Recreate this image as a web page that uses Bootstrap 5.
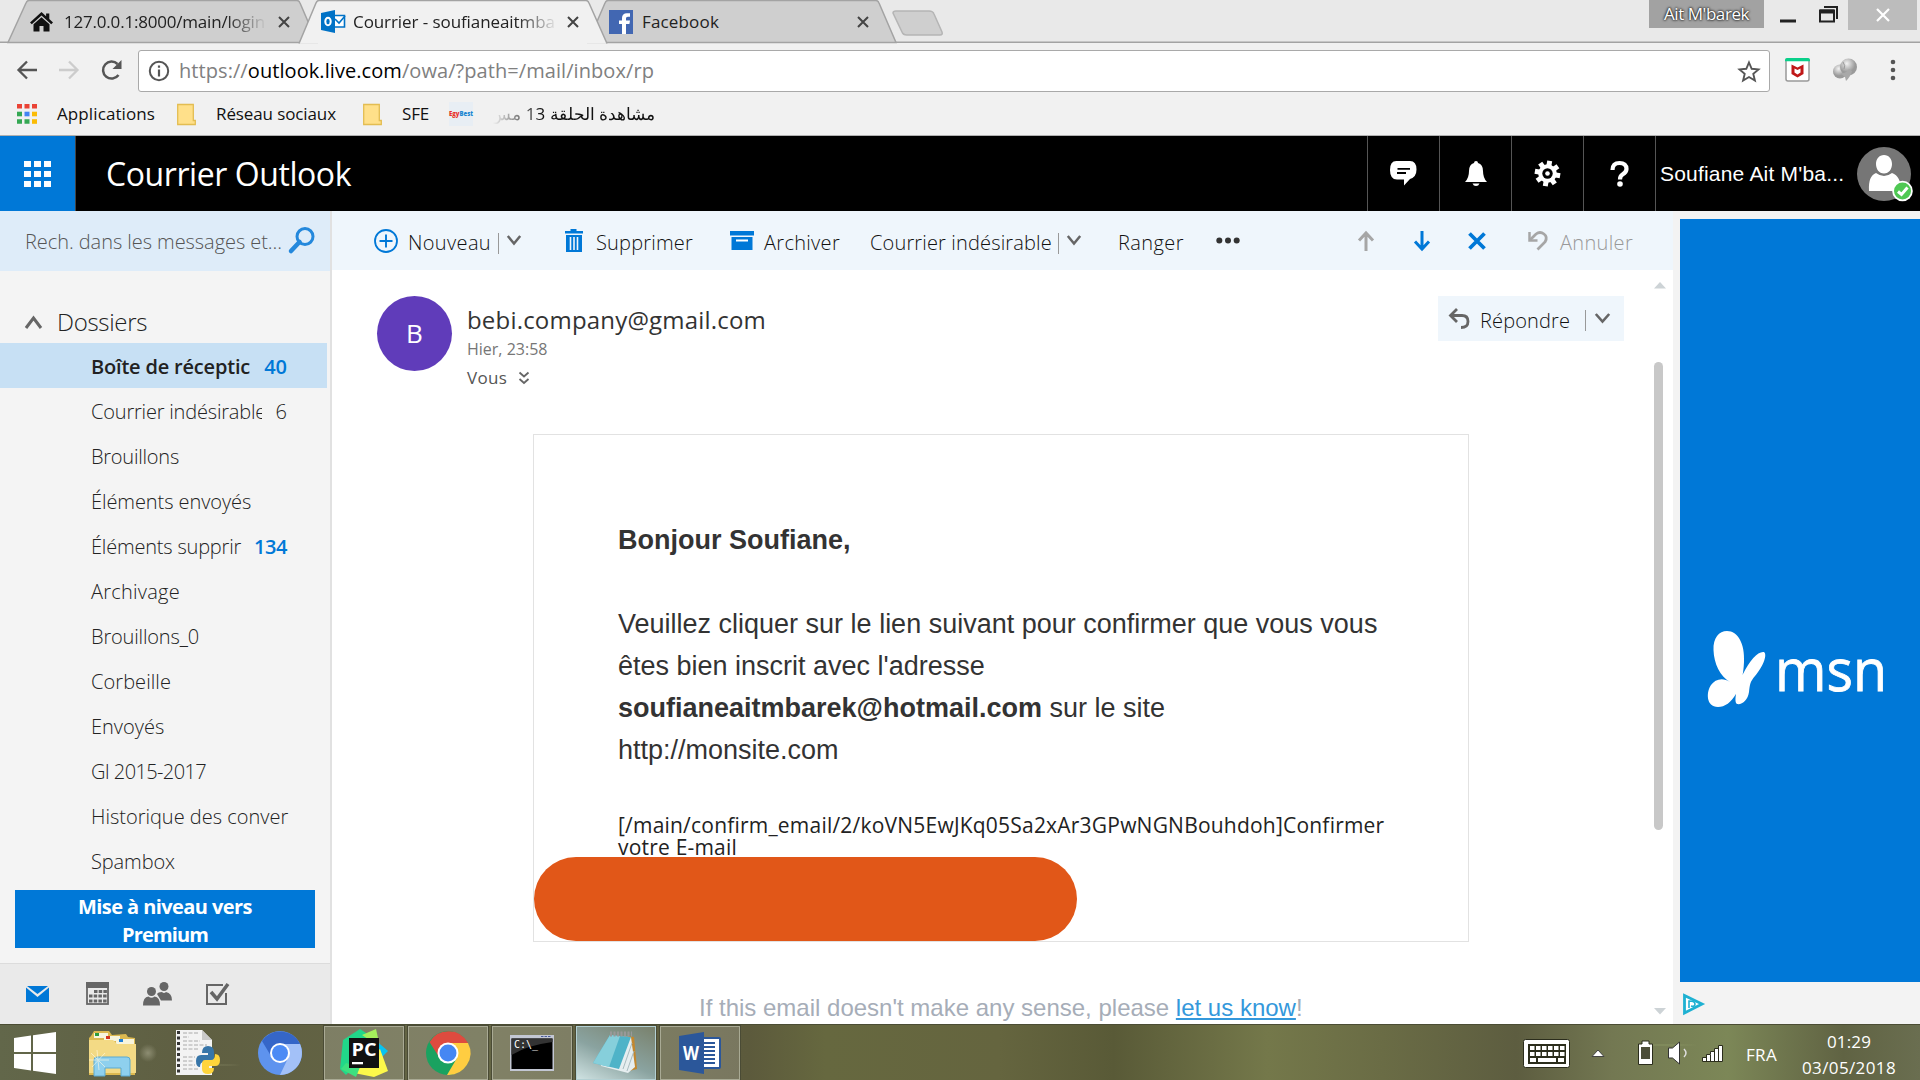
<!DOCTYPE html>
<html lang="fr">
<head>
<meta charset="utf-8">
<title>Courrier Outlook</title>
<link href="https://cdn.jsdelivr.net/npm/bootstrap@5.3.0/dist/css/bootstrap.min.css" rel="stylesheet">
<style>
body{width:1920px;height:1080px;overflow:hidden;background:#fff;font-family:"Open Sans","Noto Sans",sans-serif;color:#333;line-height:1.2}
svg{display:block;flex:none;overflow:visible}
.fit{white-space:pre;display:block}
.cells{display:grid;align-items:center}
/* browser chrome */
.tabstrip{height:43px;background:#e9e9e9;position:relative;font-size:17px;color:#222;grid-template-columns:29px 35px 209px 48px 32px 207px 49px 33px 216px 791px 115px 16px 39px 29px 69px 3px}
.tabstrip>*{position:relative}
.tab-shapes{position:absolute!important;left:0;top:0}
.tabstrip .fit{padding-top:1px}
.fade-end{overflow:hidden;-webkit-mask-image:linear-gradient(90deg,#000 80%,transparent 100%)}
.fade-start{-webkit-mask-image:linear-gradient(270deg,#000 70%,transparent 100%)}
.owner{height:28px;background:#a2a2a2;color:#fff;text-shadow:0 0 3px #000,0 0 2px #222;align-self:start}
.winclose{height:30px;background:#bcbcbc;align-self:start}
.navrow{height:54px;background:#f1f1f1;grid-template-columns:17px 42px 42px 37px 1632px 15px 48px 55px 32px}
.urlbox{height:42px;background:#fff;border:1px solid #a9a9a9;border-radius:3px;font-size:20px;color:#808080;margin-top:2px}
.urlbox b{color:#000;font-weight:400}
.marks{height:39px;background:#f1f1f1;border-bottom:1px solid #b0b0b0;font-size:17px;color:#111;padding-bottom:4px;grid-template-columns:17px 40px 120px 39px 147px 39px 47px 44px 162px}
/* suite header */
.suite{height:75px;background:#000;color:#fff}
.waffle{width:76px;background:#0078d7;border-right:1px solid #444}
.brand{font-size:32px;padding:2px 0 0 30px}
.suite-btn{width:72px;border-left:1px solid #555}
.persona{width:265px;border-left:1px solid #555;padding-left:4px;font:21px "Liberation Sans",sans-serif}
/* columns */
.stage{height:813px;overflow:hidden}
.side{width:332px;background:#f4f4f4;border-right:2px solid #e1e1e1}
.search{height:60px;background:#deecf9;color:#555;font-size:20px;font-weight:300;padding:2px 0 0 25px}
.search svg{margin-top:-4px}
.fold-head{height:42px;margin-top:30px;font-size:24px;font-weight:300;color:#222;padding-left:25px;padding-right:5px}
.folders .item{height:45px;width:327px;padding:2px 40px 0 91px;font-size:20px;font-weight:300;color:#222}
.folders .item.active{background:#c7e0f4;color:#222;font-weight:600}
.folders .name{overflow:hidden;white-space:nowrap}
.blue{color:#0078d7!important;font-weight:600}
.premium{width:300px;height:58px;margin:7px 0 0 15px;padding-top:3px;background:#0078d7;color:#fff;font-size:20px;font-weight:700;line-height:28px}
.modules{height:61px;background:#eaeaea;border-top:1px solid #dcdcdc;grid-template-columns:26px 60px 57px 63px 30px}
.mailcol{width:1341px;background:#fff}
.cmds{height:59px;background:#eff6fc;font-size:20px;font-weight:300;color:#111;grid-template-columns:42px 34px 89px 10px 58px 31px 134px 34px 106px 187px 10px 51px 98px 142px 56px 54px 60px 32px 80px}
.cmds .fit,.cmds .sep{margin-top:5px}
.sep{width:1px;height:21px;background:#999;margin-left:1px}
.cmds .disabled-cmd{color:#999}
.reader{height:754px}
.msg-head{padding:26px 0 0 45px}
.initial{width:75px;height:75px;border-radius:50%;background:#603cba;color:#fff;font-size:26px}
.who{padding-left:15px;padding-top:8px}
.addr{font-size:24px;line-height:32px}
.when{font-size:16px;color:#767676;line-height:27px}
.to{font-size:17px;line-height:30px;color:#555}
.reply{width:186px;height:45px;background:#eff6fc;font-size:20px;font-weight:300;color:#111;grid-template-columns:11px 31px 104px 11px 20px;margin-left:auto;margin-right:22px}
.reply .fit,.reply .sep{margin-top:4px}
.paper{width:936px;height:508px;border:1px solid #e2e2e2;margin:41px 0 0 201px;padding:84px 0 0 84px;font:27px/42px "Liberation Sans",sans-serif;color:#333}
.raw{font:21px/22px "Open Sans",sans-serif;color:#222;margin-top:43px}
.pill{width:543px;height:84px;border-radius:42px;background:#e15718;margin:-1px 0 0 -84px}
.foot{font:24px/30px "Liberation Sans",sans-serif;color:#a6adb8;margin:51px 0 0 367px}
.foot a{color:#3498db}
.scroller{width:27px;padding:12px 0 9px 8px}
.thumb{width:9px;height:468px;border-radius:5px;background:#c8c8c8;margin:73px 0 0 0}
.ads{width:247px;background:#f3f3f3;padding:8px 0 0 7px}
.msn{height:763px;background:#0078d7;padding-top:129px}
.adchoice{margin:12px 0 0 3px}
/* taskbar */
.taskbar{height:56px;color:#fff;background:radial-gradient(circle at 148px 28px,#8d8d72 0,transparent 9px),radial-gradient(ellipse at 222px 40px,#8d8f6a 0,transparent 28px),radial-gradient(ellipse at 1665px 20px,#8d9a66 0,transparent 40px),linear-gradient(90deg,#62674a 0,#5f5f42 10%,#656645 25%,#5c5a3c 39%,#66683f 43%,#65653f 52%,#595a37 58%,#74784a 66%,#6a6c45 72%,#5d5d40 79%,#737852 84%,#7c8757 90%,#606343 96%,#6a6e50);border-top:1px solid #4b4d34;padding-bottom:1px;grid-template-columns:14px 75px 87px 82px 66px 84px 84px 84px 84px 863px 69px 46px 30px 34px 44px 55px 96px}
.app{width:80px;height:54px;border:1px solid #a9aa94;background:#ffffff2e;box-shadow:0 0 0 1px #4a4b35}
.app.on{border-color:#b3d0d3;background:linear-gradient(25deg,#cfe2e2,#8aa3a0 45%,#79816c)}
.clock{line-height:26px;padding-top:4px}
.fra{padding-top:5px}
.fs17{font-size:17px}
/* tracking per label */
#t1,#t19{letter-spacing:-.2px}#t2,#t18{letter-spacing:-.08px}#t3{letter-spacing:.16px}#t4,#t20{letter-spacing:-.44px}
#t5,#t23{letter-spacing:.07px}#t6{letter-spacing:.1px}#t7,#t27{letter-spacing:-.11px}#t8,#t14,#t16{letter-spacing:-.19px}
#t9{letter-spacing:-.14px}#t10{letter-spacing:-.43px}#t11{letter-spacing:.2px}#t12{letter-spacing:-.06px}#t13{letter-spacing:-.31px}
#t17{letter-spacing:-.23px}#t21{letter-spacing:.24px}#t22{letter-spacing:-.16px}#t25{letter-spacing:-.62px}
#t28{letter-spacing:-.57px}#t29{letter-spacing:-.85px}#t30{letter-spacing:.35px}#t31,#t36{letter-spacing:.19px}#t32{letter-spacing:.3px}
#t33{letter-spacing:.15px}#t34{letter-spacing:.42px}#t35,#t48{letter-spacing:.33px}#t38{letter-spacing:.28px}#t39,#t49{letter-spacing:.13px}
#t45{letter-spacing:.21px}#t46{letter-spacing:.2px}#t50{letter-spacing:.38px}
</style>
</head>
<body>
<div class="tabstrip cells">
  <svg class="tab-shapes" width="1920" height="43" stroke="#a3a3a3" stroke-width="1.5">
    <path d="M0 42.3H1920"/>
    <path d="M893 13q0-2 3-2h33q4 0 5 3l8 18q1 3-2 3h-33q-4 0-5-3z" fill="#cfcfcf" stroke="#b5b5b5"/>
    <path d="M8 42.5 26 3q1-2.500 3-2.500H297q2 0 3 2.500L317 42.500z" fill="#cfcfcf"/>
    <path d="M588 42.500 605 3q1-2.500 3-2.500H876q2 0 3 2.500L896 42.500z" fill="#cfcfcf"/>
    <path d="M299 43.500 316 3q1-2.500 3-2.500H586q2 0 3 2.500L607 43.500" fill="#f1f1f1"/>
  </svg>
  <i></i>
  <svg width="25" height="20" viewBox="0 0 25 20"><path d="M12.500 0 1 10.500l1.800 1.700 9.700-8.700 9.700 8.700L24 10.500l-3.700-3.400V1.500h-3.200v2.700zM4.500 12.200V19.500h6v-5.500h4v5.500h6v-7.300l-8-7z" fill="#111"/></svg>
  <div class="fade-end" style="width:203px"><span class="fit" id="t1">127.0.0.1:8000/main/login</span></div>
  <svg width="45" height="12"><path d="M6 1 16 11M16 1 6 11" stroke="#444" stroke-width="2"/></svg>
  <svg width="25" height="23" viewBox="0 0 25 23"><path d="M0 3 14 0v23L0 20z" fill="#0072c6"/><path d="M14 5.500h9.500V17H14" fill="#fff" stroke="#0072c6" stroke-width="1.600"/><path d="M14 9l4 4 6-7" fill="none" stroke="#0072c6" stroke-width="1.600"/><ellipse cx="7" cy="11.500" rx="2.700" ry="3.700" fill="none" stroke="#fff" stroke-width="2"/></svg>
  <div class="fade-end" style="width:205px"><span class="fit" id="t2">Courrier - soufianeaitmba</span></div>
  <svg width="45" height="12"><path d="M8 1 18 11M18 1 8 11" stroke="#444" stroke-width="2"/></svg>
  <svg width="24" height="24" viewBox="0 0 24 24"><path d="M0 0h24v24H0z" fill="#4267b2"/><path d="M13 24V14h-3v-3.600h3V8c0-3.200 2-4.800 4.800-4.800H21v3.500h-2c-1.500 0-2 .7-2 2v1.700h4L20.400 14H17v10z" fill="#fff"/></svg>
  <span class="fit" id="t3">Facebook</span>
  <svg width="45" height="12"><path d="M0 1 10 11M10 1 0 11" stroke="#444" stroke-width="2"/></svg>
  <div class="owner d-flex justify-content-center align-items-center fs17"><span class="fit" id="t4">Ait M'barek</span></div>
  <i></i>
  <svg width="20" height="20"><path d="M0 9H16" stroke="#222" stroke-width="3"/></svg>
  <svg width="20" height="18" class="mb-3"><g transform="translate(0,1)" fill="none" stroke="#222" stroke-width="2"><path d="M1 4.500h14v11H1z"/><path d="M1 5.500H15" stroke-width="4"/><path d="M5 1h13v12"/></g></svg>
  <div class="winclose d-flex justify-content-center align-items-center"><svg width="14" height="12"><path d="M1 0 13 12M13 0 1 12" stroke="#fff" stroke-width="2.200"/></svg></div>
</div>
<div class="navrow cells">
  <i></i>
  <svg width="21" height="20"><path d="M20 10H2M10 1.500 1.500 10l8.500 8.500" fill="none" stroke="#555" stroke-width="2.300"/></svg>
  <svg width="21" height="20"><path d="M0 10H18M10 1.500 18.500 10 10 18.500" fill="none" stroke="#ccc" stroke-width="2.300"/></svg>
  <svg width="22" height="20"><path d="M17.500 15A8.500 8.500 0 1 1 16.500 4" fill="none" stroke="#555" stroke-width="2.500"/><path d="M20.500 0v9h-9z" fill="#555"/></svg>
  <div class="urlbox d-flex align-items-center">
    <svg width="40" height="22"><g transform="translate(20,11)"><circle r="9.200" fill="none" stroke="#555" stroke-width="2"/><path d="M0-5.500v2.300M0-1.500v7" stroke="#555" stroke-width="2.200"/></g></svg>
    <span class="fit" id="t5">https://<b>outlook.live.com</b>/owa/?path=/mail/inbox/rp</span>
    <svg class="ms-auto" width="31" height="21" viewBox="0 0 31 21"><path d="M11 1.500l2.700 6.300 6.800.6-5.200 4.500 1.600 6.700L11 16l-5.900 3.600 1.600-6.700L1.500 8.400l6.800-.6z" fill="none" stroke="#555" stroke-width="1.900"/></svg>
  </div>
  <i></i>
  <svg width="25" height="24"><rect x="1" y="1" width="23" height="22" rx="2" fill="#fff" stroke="#999" stroke-width="1.500"/><path d="M0 3.200V2q0-2 2-2h21q2 0 2 2v1.200z" fill="#0ad08a"/><path d="M6.500 6.500 12.500 9.500 18.500 6.500V16l-6 3.500L6.500 16z" fill="#c01818"/><path d="M9.500 10.500l3 1.600 3-1.600v4l-3 2-3-2z" fill="#fff"/></svg>
  <svg width="26" height="24"><defs><radialGradient id="gb" cx=".4" cy=".3"><stop stop-color="#f2f2f2"/><stop offset="1" stop-color="#9a9a9a"/></radialGradient></defs><circle cx="7" cy="13.500" r="7" fill="url(#gb)"/><circle cx="15.500" cy="9" r="8.500" fill="url(#gb)"/><path d="M7 15q6 1 9-4l3 2q-1 5-6 10l-1-4z" fill="#a8a8a8"/><path d="M10 4q3 4 1 7" stroke="#999" fill="none"/></svg>
  <svg width="6" height="22" class="ms-1" fill="#555"><circle cx="1" cy="3" r="2.300"/><circle cx="1" cy="11" r="2.300"/><circle cx="1" cy="19" r="2.300"/></svg>
</div>
<div class="marks cells">
  <i></i>
  <svg width="21" height="20"><g stroke-width="4.600" stroke-dasharray="5 2.500"><path d="M0 2.300H20" stroke="#ea4335"/><path d="M0 10H5" stroke="#34a853"/><path d="M7.500 10h5" stroke="#4285f4"/><path d="M15 10h5" stroke="#fbbc05"/><path d="M0 17.500H12.500" stroke="#34a853"/><path d="M15 17.500h5" stroke="#fbbc05"/></g></svg>
  <span class="fit" id="t6">Applications</span>
  <svg width="19" height="23"><path d="M.7 1.500h15.600v16h2v4H.7z" fill="#ffe08a" stroke="#e3bd52" stroke-width="1.300"/></svg>
  <span class="fit" id="t7">Réseau sociaux</span>
  <svg width="19" height="23"><path d="M.7 1.500h15.600v16h2v4H.7z" fill="#ffe08a" stroke="#e3bd52" stroke-width="1.300"/></svg>
  <span class="fit" id="t8">SFE</span>
  <svg width="24" height="24"><path d="M0 0h24v24H0z" fill="#e8eef4"/><text x="0" y="14" font-size="7.500" font-weight="800" textLength="24" lengthAdjust="spacingAndGlyphs"><tspan fill="#e8322a">Egy</tspan><tspan fill="#1c86d1">Best</tspan></text></svg>
  <span class="fit fade-start" id="t9" dir="rtl" lang="ar">مشاهدة الحلقة 13 مس</span>
</div>

<header class="suite d-flex align-items-stretch">
  <div class="waffle d-flex align-items-center justify-content-center"><svg width="28" height="26" fill="#fff"><path d="M0 0h7v6H0zM10 0h7v6h-7zM20 0h7v6h-7zM0 10h7v6H0zM10 10h7v6h-7zM20 10h7v6h-7zM0 20h7v6H0zM10 20h7v6h-7zM20 20h7v6h-7z"/></svg></div>
  <div class="brand d-flex align-items-center"><span class="fit" id="t10">Courrier Outlook</span></div>
  <div class="suite-btn ms-auto d-flex align-items-center justify-content-center"><svg width="27" height="25"><path d="M7 0h13q6.500 0 6.500 8.500Q26.500 16 20 18L14 24.500V18.500H7Q0 18.500 0 9T7 0z" fill="#fff"/><path d="M7.500 7.800H20M7 12h9" stroke="#000" stroke-width="1.800"/></svg></div>
  <div class="suite-btn d-flex align-items-center justify-content-center"><svg width="22" height="25" fill="#fff"><path d="M11 0q2 0 2 2 5 1.500 5 8 0 7 4 11H0q4-4 4-11 0-6.500 5-8 0-2 2-2zM7.500 22.500h7q-1 2.500-3.500 2.500t-3.500-2.500z"/></svg></div>
  <div class="suite-btn d-flex align-items-center justify-content-center"><svg width="27" height="27" viewBox="-13.500 -13.500 27 27"><g stroke="#fff" stroke-width="5" transform="rotate(10)"><path d="M0-12.800V12.800M-12.800 0H12.800M-9-9 9 9M9-9-9 9"/></g><circle r="9.300" fill="#fff"/><circle r="5.200"/><circle r="2.300" fill="#fff"/></svg></div>
  <div class="suite-btn d-flex align-items-center justify-content-center"><svg width="20" height="26"><path d="M2.500 9Q2.500 2 9.500 2T16.500 8Q16.500 11 12.500 13.500 10 15 10 18.500" fill="none" stroke="#fff" stroke-width="4.200"/><circle cx="10" cy="23" r="2.800" fill="#fff"/></svg></div>
  <div class="persona d-flex align-items-center"><span class="fit" id="t11">Soufiane Ait M'ba...</span>
    <svg class="ms-auto" width="63" height="56"><circle cx="27" cy="28" r="27" fill="#767676"/><path d="M27 9c5 0 8 4 8 9s-3 9.500-8 9.500-8-4.500-8-9.500 3-9 8-9zM12 45q-1-15 7-18 8 6 16 0 9 3 9 18z" fill="#fff"/><circle cx="45.500" cy="45" r="10.300" fill="#fff"/><circle cx="45.500" cy="45" r="8.500" fill="#4fc853"/><path d="M41 45.500l3.500 3 6-7" fill="none" stroke="#fff" stroke-width="3"/></svg></div>
</header>

<main class="stage d-flex">
  <aside class="side d-flex flex-column">
    <div class="search d-flex align-items-center"><span class="fit" id="t12">Rech. dans les messages et...</span><svg class="ms-auto" width="42" height="26"><circle cx="17" cy="9.500" r="8" fill="none" stroke="#2488dc" stroke-width="3"/><path d="M11.500 15 3 24" stroke="#2488dc" stroke-width="4.500" stroke-linecap="round"/></svg></div>
    <div class="fold-head d-flex align-items-center"><svg width="32" height="14"><path d="M1 13 8.500 3 16 13" fill="none" stroke="#666" stroke-width="3"/></svg><span class="fit" id="t13">Dossiers</span></div>
    <div class="folders">
      <div class="item active d-flex align-items-center"><span class="name" style="width:160px"><span class="fit" id="t14">Boîte de réceptic</span></span><span class="fit ms-auto blue" id="t15">40</span></div>
      <div class="item d-flex align-items-center"><span class="name" style="width:171px"><span class="fit" id="t16">Courrier indésirable</span></span><span class="fit ms-auto">6</span></div>
      <div class="item d-flex align-items-center"><span class="fit" id="t17">Brouillons</span></div>
      <div class="item d-flex align-items-center"><span class="fit" id="t18">Éléments envoyés</span></div>
      <div class="item d-flex align-items-center"><span class="name" style="width:152px"><span class="fit" id="t19">Éléments supprir</span></span><span class="fit ms-auto blue" id="t20">134</span></div>
      <div class="item d-flex align-items-center"><span class="fit" id="t21">Archivage</span></div>
      <div class="item d-flex align-items-center"><span class="fit" id="t22">Brouillons_0</span></div>
      <div class="item d-flex align-items-center"><span class="fit" id="t23">Corbeille</span></div>
      <div class="item d-flex align-items-center"><span class="fit" id="t24">Envoyés</span></div>
      <div class="item d-flex align-items-center"><span class="fit" id="t25">GI 2015-2017</span></div>
      <div class="item d-flex align-items-center"><span class="fit" id="t26">Historique des conver</span></div>
      <div class="item d-flex align-items-center"><span class="fit" id="t27">Spambox</span></div>
    </div>
    <div class="premium d-flex flex-column align-items-center"><span class="fit" id="t28">Mise à niveau vers</span><span class="fit" id="t29">Premium</span></div>
    <div class="modules cells mt-auto"><i></i>
      <svg width="23" height="16"><path d="M0 1.500V16h23V1.500L11.500 11zM1 0h21L11.500 8z" fill="#0078d7"/></svg>
      <svg width="24" height="24"><rect x="1" y="1" width="21" height="21" fill="none" stroke="#666" stroke-width="1.800"/><path d="M0 0h23v6H0z" fill="#666"/><path d="M8 9.500h13M3 14h18M3 19h18" stroke="#666" stroke-width="3" stroke-dasharray="3.500 1.200"/></svg>
      <svg width="30" height="24" fill="#666"><circle cx="21" cy="4.500" r="4.500"/><path d="M14 12q1-2 5-2 2 2 4 0 6 1 6 8.500H18z"/><circle cx="8.500" cy="9.500" r="4.500"/><path d="M0 23.500Q0 15 5.500 14.500q3 2.500 6 0Q17 15 17 23.500z"/></svg>
      <svg width="24" height="22"><path d="M17 2H1v19h19V10" fill="none" stroke="#666" stroke-width="2"/><path d="M5 9l6 7L22 1" fill="none" stroke="#666" stroke-width="3.500"/></svg>
    </div>
  </aside>
  <section class="mailcol">
    <div class="cmds cells"><i></i>
      <svg width="24" height="24"><circle cx="12" cy="12" r="11" fill="none" stroke="#0078d7" stroke-width="1.800"/><path d="M12 5.500v13M5.500 12h13" stroke="#0078d7" stroke-width="1.900"/></svg>
      <span class="fit" id="t30">Nouveau</span><i class="sep"></i>
      <svg width="14" height="11"><path d="M.8 1 7 8.500 13.200 1" fill="none" stroke="#666" stroke-width="2.500"/></svg>
      <svg width="18" height="24" fill="#0078d7"><path d="M0 2h5.500V0h6v2H18v2.500H0zM1 6h16v17H1z"/><path d="M5.500 8v13M9 8v13M12.500 8v13" stroke="#eff6fc" stroke-width="1.600"/></svg>
      <span class="fit" id="t31">Supprimer</span>
      <svg width="24" height="19" fill="#0078d7"><path d="M0 0h24v4.500H0zM1.500 6h21v13h-21z"/><path d="M6 9.500h12" stroke="#fff" stroke-width="2"/></svg>
      <span class="fit" id="t32">Archiver</span>
      <span class="fit" id="t33">Courrier indésirable</span><i class="sep"></i>
      <svg width="14" height="11"><path d="M.8 1 7 8.500 13.200 1" fill="none" stroke="#666" stroke-width="2.500"/></svg>
      <span class="fit" id="t34">Ranger</span>
      <svg width="24" height="7" fill="#333"><circle cx="3.300" cy="3.500" r="3"/><circle cx="12" cy="3.500" r="3"/><circle cx="20.700" cy="3.500" r="3"/></svg>
      <svg width="16" height="20"><path d="M8 20V3M1 9.500 8 2l7 7.500" fill="none" stroke="#a6a6a6" stroke-width="3"/></svg>
      <svg width="16" height="20"><path d="M8 0v17M1 10.500 8 18l7-7.500" fill="none" stroke="#0078d7" stroke-width="3"/></svg>
      <svg width="18" height="18"><path d="M1.500 1.500l15 15M16.500 1.500l-15 15" stroke="#0078d7" stroke-width="3.800"/></svg>
      <svg width="20" height="20"><path d="M1.500 1v8.500h8" fill="none" stroke="#a6a6a6" stroke-width="2.500"/><path d="M2 9 8 3Q12 0 16 3T17 11L9.500 18.500" fill="none" stroke="#a6a6a6" stroke-width="2.800"/></svg>
      <span class="fit disabled-cmd" id="t35">Annuler</span>
    </div>
    <div class="reader d-flex">
      <div class="flex-grow-1">
        <div class="msg-head d-flex">
          <div class="initial d-flex align-items-center justify-content-center">B</div>
          <div class="who"><span class="fit addr" id="t36">bebi.company@gmail.com</span><span class="fit when" id="t37">Hier, 23:58</span><div class="to d-flex align-items-center"><span class="fit" id="t38">Vous</span><svg class="ms-2" width="18" height="14"><path d="M4.500 1.500l4.500 4 4.500-4M4.500 8l4.500 4 4.500-4" fill="none" stroke="#666" stroke-width="1.800"/></svg></div></div>
          <div class="reply cells"><i></i>
            <svg width="22" height="20"><path d="M8 0 1.500 6.500 8 13M2 6.500H13q6 0 6 6T12 18.500" fill="none" stroke="#666" stroke-width="2.800"/></svg>
            <span class="fit" id="t39">Répondre</span><i class="sep"></i>
            <svg width="15" height="11"><path d="M.8 1 7.500 8.500 14.200 1" fill="none" stroke="#666" stroke-width="2.600"/></svg>
          </div>
        </div>
        <div class="paper">
          <b class="fit">Bonjour Soufiane,</b><br>
          <span class="fit">Veuillez cliquer sur le lien suivant pour confirmer que vous vous</span>
          <span class="fit">êtes bien inscrit avec l'adresse</span>
          <span class="fit"><b>soufianeaitmbarek@hotmail.com</b> sur le site</span>
          <span class="fit">http://monsite.com</span>
          <div class="raw"><span class="fit" id="t45">[/main/confirm_email/2/koVN5EwJKq05Sa2xAr3GPwNGNBouhdoh]Confirmer</span><span class="fit" id="t46">votre E-mail</span></div>
          <div class="pill"></div>
        </div>
        <div class="foot"><span class="fit">If this email doesn't make any sense, please <a href="#">let us know</a>!</span></div>
      </div>
      <div class="scroller d-flex flex-column"><svg width="12" height="7"><path d="M0 6.500 6 0l6 6.500z" fill="#cdd3d6"/></svg><div class="thumb"></div><svg class="mt-auto" width="12" height="7"><path d="M0 0h12L6 6.500z" fill="#cdd3d6"/></svg></div>
    </div>
  </section>
  <aside class="ads">
    <div class="msn d-flex align-items-center">
      <svg width="240" height="130" viewBox="10 0 240 130" fill="#fff"><path d="M57 31C68 31 75 44 74 62 73 88 62 107 48 107 36 107 36 92 41 85 45 79 53 77 60 82 50 76 44 64 43.500 50 43 38 49 31 57 31zM94 52C98 55 92 68 85 76 80 82 80 84 79 92 78 100 72 105 67 104 63 101 68 84 73 74 80 60 88 51 94 52z"/><path d="M82 62Q71 78 66.500 104" fill="none"/><text x="105" y="91" font-family="Open Sans" font-size="58" stroke="#fff" stroke-width=".8" textLength="112" lengthAdjust="spacingAndGlyphs">msn</text></svg>
    </div>
    <svg width="22" height="22" class="adchoice"><path d="M1.500 1.500V19L19 10z" fill="#fff" stroke="#1eb1d2" stroke-width="2.800"/><path d="M6 14V7q6 0 6 3t-4 2" fill="none" stroke="#1eb1d2" stroke-width="1.600"/></svg>
  </aside>
</main>

<footer class="taskbar cells"><i></i>
  <svg width="42" height="42" fill="#fff"><path d="M0 6 17 3.500V20H0zM19 3.200 42 0v20H19zM0 22h17v16.500L0 36zM19 22h23v20l-23-3.200z"/></svg>
  <svg width="47" height="46"><path d="M2 6 5 1h15l3 4 14-1 2 3 7 1v37H0V8z" fill="#dcb950"/><path d="M5 3h14v5H5z" fill="#f7f4dd"/><path d="M6 3h4v3H6z" fill="#2b9a3e"/><path d="M15 6h16v5H15z" fill="#f7f4dd"/><path d="M17 6h4v3h-4z" fill="#d3321f"/><path d="M27 9h18v5H27z" fill="#f7f4dd"/><path d="M30 9h4v3h-4z" fill="#1e7fd6"/><path d="M0 10h24l4 4h19v29H0z" fill="#f3da85"/><path d="M5 46V30q0-3 3-3h30q3 0 3 3v16h-9v-8H16v8z" fill="#8ed0ee" stroke="#5aa9d0"/><path d="M0 30h20M8 20l2 20M2 23l14 14M16 23 3 37" stroke="#fffbe6" opacity=".6"/></svg>
  <svg width="45" height="46"><path d="M0 0h26l10 10v35H0z" fill="#f3f3f3"/><path d="M26 0l10 10H26z" fill="#c9c9c9"/><path d="M2.500 1v44" stroke="#333" stroke-width="3" stroke-dasharray="3 2.500"/><path d="M7 3h16M7 7h6M7 11h17M7 15h24M7 19h15M7 27h12M7 31h10M7 35h12M7 39h16" stroke="#aaa" stroke-dasharray="4 1.500"/><path d="M26 23q0-7 6-7t6 6v7q0 3-3 3h-7q-4 0-4 5-4 0-4-6t5-6h7v-2z" fill="#3775a8"/><path d="M26 34q0-4 3-4h6q4 0 4-6 5 0 5 6t-5 6h-6v2h5q0 6-6 6t-6-5z" fill="#ffd43b"/></svg>
  <svg width="44" height="44" viewBox="-22 -22 44 44"><circle r="22" fill="#5e93ee"/><path d="M-18-12A22 22 0 0 1 20-9H0L-9 3z" fill="#3566c8"/><path d="M20-9A22 22 0 0 1 0 22L9 3 0-9z" fill="#a3c1f8"/><circle r="10" fill="#fff"/><circle r="8" fill="#4c8bf5"/></svg>
  <div class="app d-flex align-items-center justify-content-center"><svg width="48" height="48"><path d="M3 11 20 0l18 12L6 46 0 40z" fill="#21d789"/><path d="M22 6 36 0l4 18z" fill="#a5ef5c"/><path d="M34 10l14 12-9 9z" fill="#07c3f2"/><path d="M14 44l26-24 8 22-14 6z" fill="#fcf84a"/><path d="M6 34l14 4-4 10L1 40z" fill="#3de07f"/><path d="M9 9h30v30H9z" fill="#111"/><path d="M12 33h11v2.300H12z" fill="#fff"/><text x="11.500" y="26.500" font-size="18" font-weight="700" textLength="25" lengthAdjust="spacingAndGlyphs" fill="#fff">PC</text></svg></div>
  <div class="app d-flex align-items-center justify-content-center"><svg width="44" height="44" viewBox="-22 -22 44 44"><circle r="22" fill="#1aa260"/><path d="M-18.500-11A22 22 0 0 1 20-10H0L-9 4z" fill="#de4b3f"/><path d="M20-10A22 22 0 0 1-1 22L9 5 0-10z" fill="#ffcd41"/><circle r="10.500" fill="#fff"/><circle r="8.500" fill="#4587f3"/></svg></div>
  <div class="app d-flex align-items-center justify-content-center"><svg width="44" height="36"><path d="M0 0h44v36H0z" fill="#c3c7d3"/><path d="M1.500 3.500h41V34h-41z"/><path d="M1.500 3.500h41V7Q18 10 1.500 20z" fill="#333"/><path d="M31 1.500h10" stroke="#4a5c9a" stroke-dasharray="2.500 1"/><text x="4" y="13" font-family="DejaVu Sans Mono" font-size="10" fill="#fff">C:\_</text></svg></div>
  <div class="app on d-flex align-items-center justify-content-center"><svg width="46" height="44"><path d="M35 5l6 1 3 32-8 2z" fill="#c2872f"/><path d="M18 5l20 1 4 30-7 6L8 35z" fill="#e6eef0"/><path d="M17 4l21 2-12 32L0 32z" fill="#4fb3c8"/><path d="M17 4l10 1-11 31L0 32z" fill="#86cfdb"/><path d="M17 3h22" stroke="#999" stroke-width="5" stroke-dasharray="2 1.500"/><path d="M39 12 30 38M41 20l-7 20" stroke="#a9bcc0"/></svg></div>
  <div class="app d-flex align-items-center justify-content-center"><svg width="42" height="42"><path d="M22 5h18q2 0 2 2v28q0 2-2 2H22z" fill="#2b579a"/><path d="M23 7h17v28H23z" fill="#fff"/><path d="M25 11h11M25 15h11M25 19h11M25 23h11M25 27h11M25 31h11" stroke="#2b579a" stroke-width="2"/><path d="M0 4 25 0v42L0 38z" fill="#2b579a"/><text x="4" y="28" font-size="19" font-weight="700" textLength="16" lengthAdjust="spacingAndGlyphs" fill="#fff">W</text></svg></div>
  <svg width="47" height="29"><rect x=".5" y=".5" width="46" height="28" rx="2" fill="#fff" stroke="#2b2d1c"/><path d="M5 5h38v20H5z" fill="#2b2d1c"/><path d="M7 9h34.500M7 15h34.500" stroke="#fff" stroke-width="4" stroke-dasharray="4.500 1.500"/><path d="M7 21h6M15 21h18M35 21h6" stroke="#fff" stroke-width="4"/></svg>
  <svg width="12" height="8"><path d="M0 7.500 6 1l6 6.500z" fill="#fff" stroke="#444"/></svg>
  <svg width="15" height="24"><path d="M4 0h7v3h3.500v20.500H.5V3H4z" fill="#fff" stroke="#2b2d1c"/><path d="M3 6h9v12H3z" fill="#4c4e38"/></svg>
  <svg width="21" height="24"><path d="M.5 7h4l7-6v22l-7-6h-4z" fill="#fff" stroke="#333"/><path d="M16 8q4 4 0 8" fill="none" stroke="#ddd" stroke-width="1.500"/></svg>
  <svg width="21" height="17"><path d="M.5 16.500v-4h4v-3h4v-3h4v-3h4V.5h4v16z" fill="#fff" stroke="#2b2d1c"/><path d="M4.500 12v4M8.500 10v6M12.500 6v10M16.500 3v13" stroke="#2b2d1c"/></svg>
  <span class="fit fs17 fra" id="t48">FRA</span>
  <div class="clock d-flex flex-column align-items-center fs17"><span class="fit" id="t49">01:29</span><span class="fit" id="t50">03/05/2018</span></div>
</footer>
<script src="https://cdn.jsdelivr.net/npm/bootstrap@5.3.0/dist/js/bootstrap.bundle.min.js"></script>
</body>
</html>
